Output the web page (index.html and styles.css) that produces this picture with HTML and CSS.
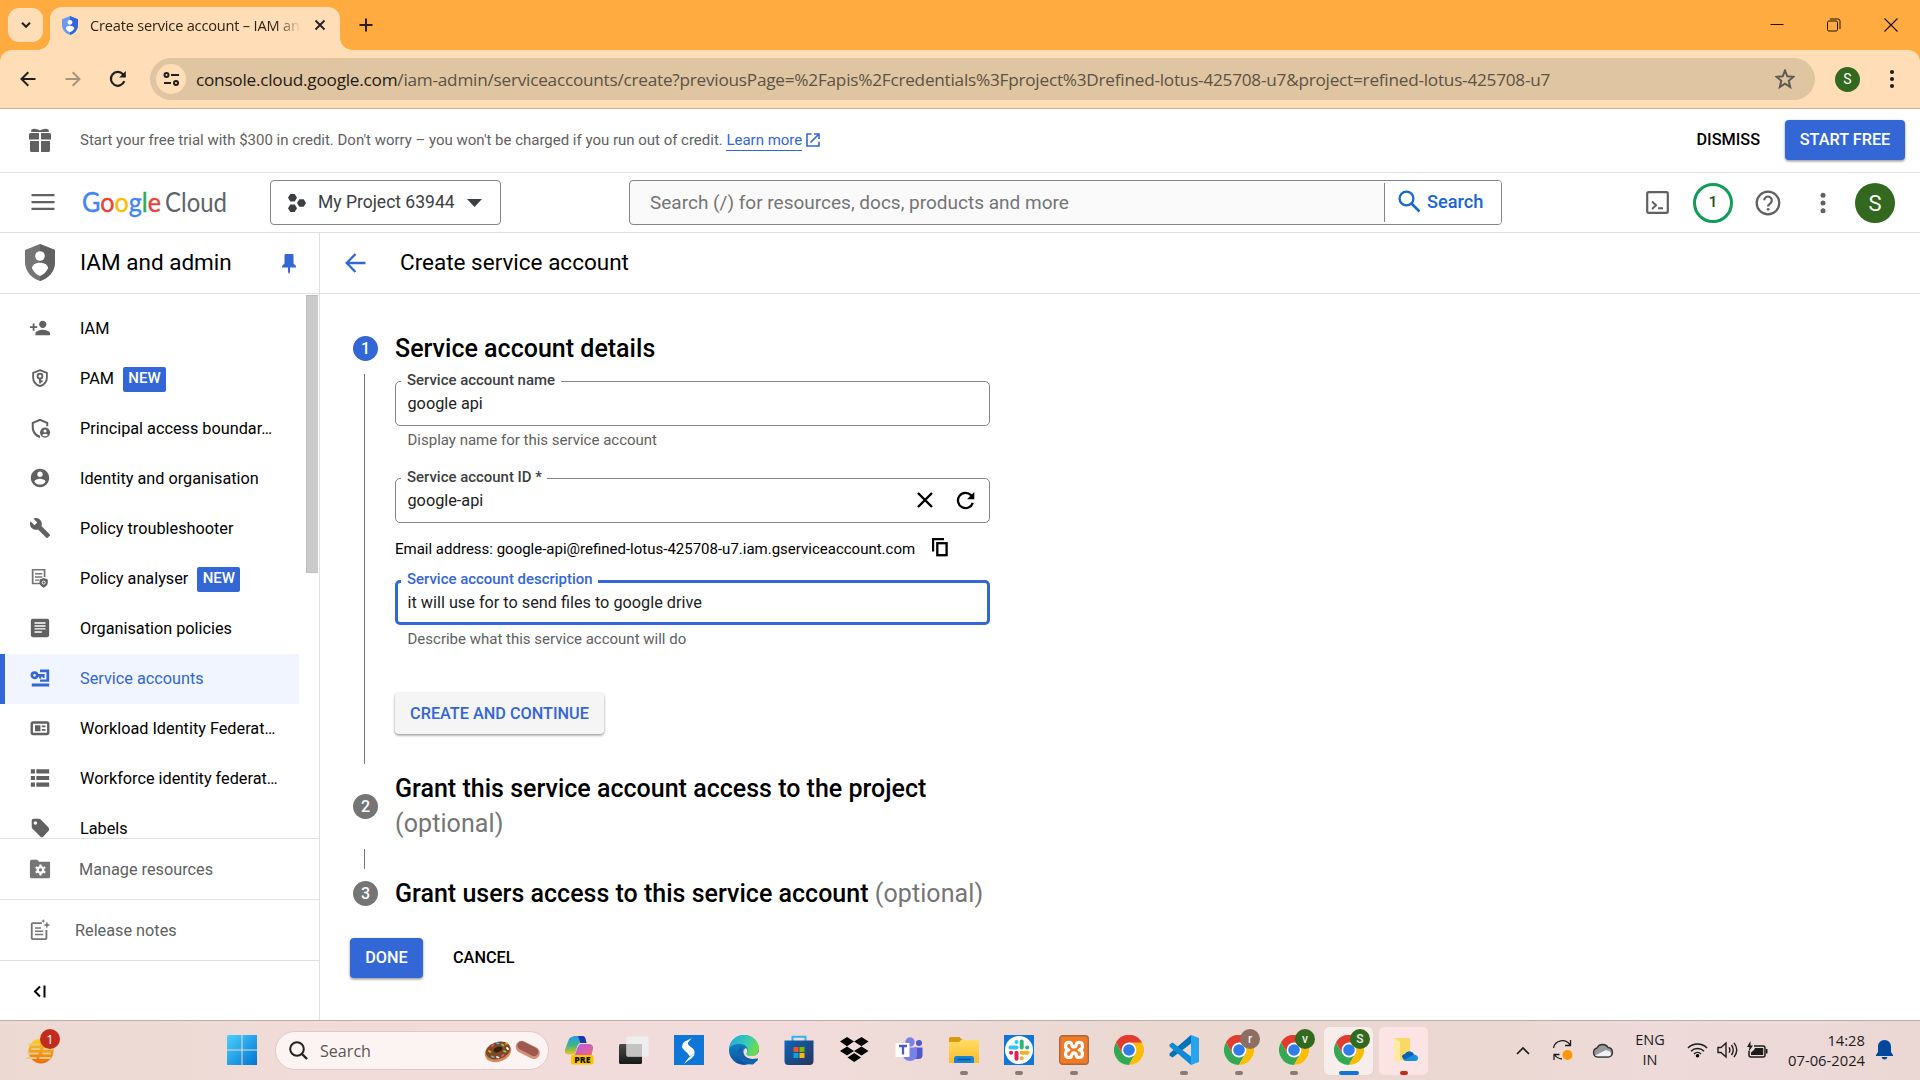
FILE: index.html
```html
<!DOCTYPE html>
<html lang="en-GB">
<head>
<meta charset="utf-8">
<title>Create service account – IAM and admin</title>
<link rel="stylesheet" href="styles.css">
</head>
<body>
<svg class="defs" aria-hidden="true">
  <defs>
    <linearGradient id="win" x1="0" y1="0" x2="1" y2="1"><stop offset="0" stop-color="#4ad1ff"/><stop offset="1" stop-color="#0074d4"/></linearGradient>
    <linearGradient id="edgeA" x1="0" y1="0" x2="1" y2="0.4"><stop offset="0" stop-color="#21a5e0"/><stop offset="0.6" stop-color="#35c9b7"/><stop offset="1" stop-color="#6bdc4c"/></linearGradient>
    <linearGradient id="edgeB" x1="0" y1="0" x2="0" y2="1"><stop offset="0" stop-color="#1793d9"/><stop offset="1" stop-color="#0c4f9c"/></linearGradient>
    <linearGradient id="store" x1="0" y1="0" x2="1" y2="1"><stop offset="0" stop-color="#0f62b8"/><stop offset="1" stop-color="#27365c"/></linearGradient>
    <linearGradient id="folder" x1="0" y1="0" x2="0" y2="1"><stop offset="0" stop-color="#ffdc63"/><stop offset="1" stop-color="#fcbc2a"/></linearGradient>
    <linearGradient id="copA" x1="0" y1="0" x2="0" y2="1"><stop offset="0" stop-color="#1f9ff0"/><stop offset="0.5" stop-color="#3fb57f"/><stop offset="1" stop-color="#f2c31c"/></linearGradient>
    <linearGradient id="copB" x1="0" y1="0" x2="1" y2="1"><stop offset="0" stop-color="#b25cf0"/><stop offset="1" stop-color="#f2667a"/></linearGradient>
    <linearGradient id="sun" x1="0" y1="0" x2="0" y2="1"><stop offset="0" stop-color="#ffd51c"/><stop offset="1" stop-color="#ec6a0c"/></linearGradient>
    <linearGradient id="tv" x1="0" y1="0" x2="0" y2="1"><stop offset="0" stop-color="#4a4a48"/><stop offset="1" stop-color="#191919"/></linearGradient>
    <g id="chrome">
      <circle cx="15" cy="15" r="15" fill="#fff"/>
      <path d="M15 15 2 7.5A15 15 0 0 1 28 7.5H15z" fill="#ea4335"/>
      <path d="M2 7.5A15 15 0 0 0 15 30L21.2 19 15 15 8.6 18.8z" fill="#34a853"/>
      <path d="M28 7.5A15 15 0 0 1 15 30L21.4 18.8 15 7.5z" fill="#fbbc04"/>
      <path d="M2 7.5 8.7 19 15 15V7.5H28A15 15 0 0 0 2 7.5z" fill="#e33b2e"/>
      <circle cx="15" cy="15" r="7.4" fill="#fff"/><circle cx="15" cy="15" r="5.8" fill="#2f7de9"/>
    </g>
  </defs>
</svg>

<header class="browser">
  <div class="tabstrip">
    <button class="tab-search"><svg width="12" height="12" viewBox="0 0 12 12"><path d="M2 3.800 6 7.800 10 3.800" fill="none" stroke="#1f1f1f" stroke-width="2"/></svg></button>
    <div class="tab">
      <svg width="16" height="19" viewBox="0 0 16 19"><path d="M8 0 16 3.200V9c0 4.600-3.400 8.600-8 10C3.400 17.600 0 13.600 0 9V3.200z" fill="#6a99ef"/><path d="M8 0 16 3.200V9c0 4.600-3.400 8.600-8 10z" fill="#3367d6"/><circle cx="8" cy="6.300" r="2.400" fill="#fff"/><path d="M8 9.800c2.500 0 4.200 1.200 4.200 2.700C11.400 14.300 9.900 15.500 8 16.200 6.100 15.500 4.600 14.300 3.800 12.500c0-1.500 1.700-2.700 4.200-2.700z" fill="#fff"/></svg>
      <span class="tab-title">Create service account – IAM an</span>
      <svg class="tab-x" width="12" height="12" viewBox="0 0 12 12"><path d="M1.500 1.500l9 9M10.500 1.500l-9 9" stroke="#1f1f1f" stroke-width="1.800"/></svg>
    </div>
    <svg class="new-tab" width="14" height="14" viewBox="0 0 14 14"><path d="M7 .5v13M.5 7h13" stroke="#2a2013" stroke-width="2"/></svg>
    <div class="window-buttons">
      <svg width="14" height="14" viewBox="0 0 14 14"><path d="M.5 6.500h13" stroke="#1a1408"/></svg>
      <svg width="14" height="14" viewBox="0 0 14 14"><g fill="none" stroke="#1a1408"><rect x=".5" y="3" width="10" height="10" rx="1.500"/><path d="M3 1h8a2 2 0 0 1 2 2v8"/></g></svg>
      <svg width="14" height="14" viewBox="0 0 14 14"><path d="M.5.5l13 13M13.500.5l-13 13" stroke="#1a1408" stroke-width="1.100"/></svg>
    </div>
  </div>
  <div class="toolbar">
    <div class="nav-buttons">
      <svg width="16" height="16" viewBox="0 0 16 16"><path d="M15.500 8H1.800M8.300 1.200 1.500 8l6.800 6.800" fill="none" stroke="#1f1f1f" stroke-width="2"/></svg>
      <svg width="16" height="16" viewBox="0 0 16 16"><path d="M.5 8h13.700M7.700 1.200 14.500 8l-6.800 6.800" fill="none" stroke="#a8927a" stroke-width="2"/></svg>
      <svg width="18" height="18" viewBox="0 0 18 18"><path d="M15.300 11.200A6.900 6.900 0 1 1 14 4.300l2 2.200" fill="none" stroke="#1f1f1f" stroke-width="2.200"/><path d="M16.800 1v6.600h-6.600z" fill="#1f1f1f"/></svg>
    </div>
    <div class="omnibox">
      <span class="site-info"><svg width="17" height="16" viewBox="0 0 17 16"><g fill="none" stroke="#1f1f1f" stroke-width="2"><circle cx="3.500" cy="4" r="2"/><path d="M8 4h8M1 12h7"/><circle cx="13" cy="12" r="2"/></g></svg></span>
      <span class="url"><b>console.cloud.google.com</b>/iam-admin/serviceaccounts/create?previousPage=%2Fapis%2Fcredentials%3Fproject%3Drefined-lotus-425708-u7&amp;project=refined-lotus-425708-u7</span>
      <svg width="20" height="20" viewBox="0 0 20 20"><path d="M10 1.500l2.300 5.800 6.200.5-4.800 4 1.500 6.200L10 14.600l-5.200 3.400 1.500-6.200-4.800-4 6.200-.5z" fill="none" stroke="#5f5a55" stroke-width="2"/></svg>
    </div>
    <span class="profile">S</span>
    <svg width="6" height="22" viewBox="0 0 6 22" fill="#1f1f1f"><circle cx="3" cy="4" r="2.100"/><circle cx="3" cy="11" r="2.100"/><circle cx="3" cy="18" r="2.100"/></svg>
  </div>
</header>

<section class="trial">
  <svg width="24" height="24" viewBox="0 0 24 24" fill="#616161"><path d="M3.500 1.500c2.500-1.500 5.500-.5 8.500 1 3-1.500 6-2.500 8.500-1L21 4H3z"/><path d="M1 6.500Q1 5 2.500 5H11v6.500H1zM13 5h8.500Q23 5 23 6.500v5H13zM2 13h9v11H3.500Q2 24 2 22.500zM13 13h9v9.500q0 1.500-1.500 1.500H13z"/></svg>
  <p>Start your free trial with $300 in credit. Don't worry – you won't be charged if you run out of credit. <a>Learn more</a></p>
  <svg class="ext" width="14" height="14" viewBox="0 0 14 14"><path d="M5.500 1H1v12h12V8.500M8 1h5v5M13 1 4.500 9.500" fill="none" stroke="#3367d6" stroke-width="1.600"/></svg>
  <button class="dismiss">DISMISS</button>
  <button class="btn primary">START FREE</button>
</section>

<nav class="topbar">
  <svg class="menu" width="24" height="18" viewBox="0 0 24 18" fill="#616161"><path d="M.5 1h23v2.300H.5zM.5 7.900h23v2.300H.5zM.5 14.700h23V17H.5z"/></svg>
  <svg class="logo" width="150" height="44" viewBox="0 0 150 44" font-family="Lato, sans-serif" font-size="27">
    <text x="1" y="31" textLength="79" lengthAdjust="spacingAndGlyphs" stroke-width=".4"><tspan fill="#4285f4" stroke="#4285f4">G</tspan><tspan fill="#ea4335" stroke="#ea4335">o</tspan><tspan fill="#fbbc04" stroke="#fbbc04">o</tspan><tspan fill="#4285f4" stroke="#4285f4">g</tspan><tspan fill="#34a853" stroke="#34a853">l</tspan><tspan fill="#ea4335" stroke="#ea4335">e</tspan></text>
    <text x="84" y="31" font-size="26" fill="#5f6368" textLength="62" lengthAdjust="spacingAndGlyphs">Cloud</text>
  </svg>
  <button class="project">
    <svg width="18" height="18" viewBox="0 0 18 18" fill="#3c4043"><path d="M2.300 0h4.400L9 3.800 6.700 7.600H2.300L0 3.800zM2.300 10.400h4.400L9 14.200 6.700 18H2.300L0 14.200zM11.300 5.200h4.400L18 9l-2.300 3.800h-4.400L9 9z"/></svg>
    <span>My Project 63944</span>
    <svg width="15" height="8" viewBox="0 0 15 8"><path d="M0 0h15L7.500 8z" fill="#3c4043"/></svg>
  </button>
  <div class="search">
    <span class="placeholder">Search (/) for resources, docs, products and more</span>
    <span class="go"><svg width="23" height="23" viewBox="0 0 23 23"><circle cx="8.500" cy="8.500" r="6.900" fill="none" stroke="#1967d2" stroke-width="2.300"/><path d="M13.500 13.500l8 8" stroke="#1967d2" stroke-width="2.700"/></svg>Search</span>
  </div>
  <div class="tools">
    <svg width="23" height="23" viewBox="0 0 23 23"><rect x="1.200" y="1.200" width="20.600" height="20.600" rx="1.500" fill="none" stroke="#616161" stroke-width="2.200"/><path d="M6 10.500l4 3.700-4 3.700M12 17.200h5" fill="none" stroke="#616161" stroke-width="2"/></svg>
    <span class="ring">1</span>
    <svg width="26" height="26" viewBox="0 0 26 26"><circle cx="13" cy="13" r="11.300" fill="none" stroke="#616161" stroke-width="2.300"/><path d="M9.200 10.200a3.800 3.800 0 1 1 6.300 3c-1.500 1.100-2.400 1.700-2.400 3.300" fill="none" stroke="#616161" stroke-width="2.200"/><circle cx="13.100" cy="19.300" r="1.400" fill="#616161"/></svg>
    <svg width="6" height="22" viewBox="0 0 6 22" fill="#616161"><circle cx="3" cy="3.200" r="2.500"/><circle cx="3" cy="11" r="2.500"/><circle cx="3" cy="18.800" r="2.500"/></svg>
    <span class="avatar">S</span>
  </div>
</nav>

<div class="page">
  <aside class="sidebar">
    <div class="side-title">
      <svg width="30" height="37" viewBox="0 0 30 37"><path d="M15 0 30 6v12c0 9-6.400 16.500-15 19C6.400 34.500 0 27 0 18V6z" fill="#757575"/><path d="M15 0 30 6v12c0 9-6.400 16.500-15 19z" fill="#616161"/><circle cx="15" cy="12" r="4.800" fill="#fff"/><path d="M15 18.700c5 0 8 2.400 8 5.500-1.500 3.700-4.500 6.300-8 7.800-3.500-1.500-6.500-4.100-8-7.800 0-3.100 3-5.500 8-5.500z" fill="#fff"/></svg>
      <h2>IAM and admin</h2>
      <svg class="pin" width="14" height="20" viewBox="0 0 14 20" fill="#3367d6"><path d="M2.500 1.200Q2.500 0 3.700 0h6.600q1.200 0 1.200 1.200V9.500L14 12v1.500H8V18l-1 2-1-2v-4.500H0V12l2.500-2.500z"/></svg>
    </div>
    <div class="side-scroll">
      <ul>
        <li><svg viewBox="0 0 24 24"><path d="M15 12c2.210 0 4-1.790 4-4s-1.790-4-4-4-4 1.790-4 4 1.790 4 4 4zm-9-2V7H4v3H1v2h3v3h2v-3h3v-2H6zm9 4c-2.670 0-8 1.340-8 4v2h16v-2c0-2.660-5.330-4-8-4z"/></svg>IAM</li>
        <li><svg viewBox="0 0 24 24"><path d="M12 3.500l7.500 2.800v5.200c0 4.300-3 8-7.500 9.400-4.500-1.400-7.500-5.100-7.500-9.400V6.300z" fill="none" stroke="#616161" stroke-width="2"/><circle cx="12" cy="10" r="2.600" fill="none" stroke="#616161" stroke-width="2"/><path d="M11 12h2v6h-2zM13 14.500h1.800v2H13z"/></svg>PAM<em>NEW</em></li>
        <li><svg viewBox="0 0 24 24"><path d="M21 10V5.700L12 2 3 5.700v5.800c0 5.200 3.600 10 8.500 11.400l.5-.2V20.500c-4-1.500-6.800-5.200-6.800-9.200V7.100L12 4.300l6.800 2.800V10z"/><circle cx="17.500" cy="17" r="5.500"/><circle cx="17.500" cy="15.300" r="1.700" fill="#fff"/><path d="M14.300 19.500c.8-1.300 5.600-1.300 6.400 0-1.500 2-4.900 2-6.400 0z" fill="#fff"/></svg>Principal access boundar…</li>
        <li><svg viewBox="0 0 24 24"><path d="M12 2C6.480 2 2 6.480 2 12s4.480 10 10 10 10-4.480 10-10S17.520 2 12 2zm0 3c1.660 0 3 1.340 3 3s-1.340 3-3 3-3-1.340-3-3 1.340-3 3-3zm0 14.200c-2.500 0-4.710-1.280-6-3.220.030-1.990 4-3.080 6-3.080 1.990 0 5.970 1.090 6 3.080-1.290 1.940-3.500 3.220-6 3.220z"/></svg>Identity and organisation</li>
        <li><svg viewBox="0 0 24 24"><path d="M22.700 19l-9.100-9.100c.9-2.300.4-5-1.500-6.900-2-2-5-2.400-7.400-1.300L9 6 6 9 1.600 4.700C.4 7.100.9 10.100 2.900 12.100c1.900 1.900 4.600 2.400 6.900 1.500l9.100 9.100c.4.4 1 .4 1.400 0l2.300-2.300c.5-.4.5-1.100.1-1.400z"/></svg>Policy troubleshooter</li>
        <li><svg viewBox="0 0 24 24"><path d="M12 18H4V3h13v8" fill="none" stroke="#757575" stroke-width="1.900"/><path d="M6.500 6.500h8v1.600h-8zM6.500 10h8v1.600h-8zM6.500 13.500H11v1.600H6.500z" fill="#757575"/><path d="M16 12l4.500 1.700v3.300c0 2.500-1.900 4.500-4.500 5.500-2.600-1-4.500-3-4.500-5.500v-3.300z"/><circle cx="16" cy="17" r="1.700" fill="none" stroke="#fff"/></svg>Policy analyser<em>NEW</em></li>
        <li><svg viewBox="0 0 24 24"><rect x="2" y="2" width="20" height="20" rx="2"/><path d="M6 6.500h12M6 9.800h12M6 13h12M6 16.300h8" stroke="#fff" stroke-width="1.500"/></svg>Organisation policies</li>
        <li class="active"><svg viewBox="0 0 24 24"><circle cx="6" cy="9" r="2.900" fill="none" stroke="#3367d6" stroke-width="2.800"/><path d="M8.500 7.500h8.500v4.500h-2v-1.300h-1.500V12.500h-2.500v-1.800H8.500zM12 2.800h10V16H12v-2.500h7V5.800H12zM3 18h19v3.200H3z"/></svg>Service accounts</li>
        <li><svg viewBox="0 0 24 24"><rect x="3" y="6" width="18" height="12.500" rx="1.500" fill="none" stroke="#616161" stroke-width="2.600"/><path d="M6.500 9h6v6.500h-6zM14 9.300h4v2h-4zM14 13h4v2h-4z"/></svg>Workload Identity Federat…</li>
        <li><svg viewBox="0 0 24 24"><path d="M2 2.500h4.500v4.500H2zM8 2.500h14v4.500H8zM2 9.700h4.500v4.500H2zM8 9.700h14v4.500H8zM2 17h4.500v4.500H2zM8 17h14v4.500H8z"/></svg>Workforce identity federat…</li>
        <li><svg viewBox="0 0 24 24"><path d="M21.410 11.580l-9-9C12.050 2.220 11.550 2 11 2H5C3.900 2 3 2.900 3 4v7c0 .55.220 1.050.590 1.420l9 9c.36.360.860.580 1.410.580.550 0 1.050-.220 1.410-.590l6-6.500c.370-.360.590-.860.590-1.410 0-.550-.230-1.060-.590-1.420zM7 8.500a2 2 0 1 1 0-4 2 2 0 0 1 0 4z"/></svg>Labels</li>
      </ul>
      <div class="thumb"></div>
    </div>
    <div class="side-link"><svg viewBox="0 0 24 24" fill="#757575"><path d="M3 2h6l2 2h11q1 0 1 1v15.500q0 1.500-1.500 1.500h-19Q1 22 1 20.500V4q0-2 2-2z"/><circle cx="12.500" cy="13" r="3" fill="none" stroke="#fff" stroke-width="2.600"/><path d="M12.500 7v3M12.500 16v3M7.300 10l2.600 1.500M15.100 14.500l2.600 1.500M7.300 16l2.600-1.500M15.100 11.500l2.600-1.500" stroke="#fff" stroke-width="2.400"/></svg>Manage resources</div>
    <div class="side-link notes"><svg viewBox="0 0 24 24" fill="#757575"><path d="M14 4.500H4q-1 0-1 1V21q0 1 1 1h14q1 0 1-1V12" fill="none" stroke="#757575" stroke-width="2"/><path d="M6.500 9h6.500v1.700H6.500zM6.500 12.500h9v1.700h-9zM6.500 16h9v1.700h-9zM19.500 2.500l1 3 3 1-3 1-1 3-1-3-3-1 3-1zM15.500 0l.6 1.700 1.700.6-1.700.6-.6 1.700-.6-1.700-1.700-.6 1.700-.6z"/></svg>Release notes</div>
    <div class="collapse"><svg width="13" height="13" viewBox="0 0 13 13"><path d="M7 1.500 2 6.500l5 5M11.500.5v12" fill="none" stroke="#000" stroke-width="2"/></svg></div>
  </aside>

  <main>
    <div class="page-title">
      <svg width="21" height="20" viewBox="0 0 21 20"><path d="M20.500 10H2M10.500 1 1.700 10l8.800 9" fill="none" stroke="#3367d6" stroke-width="2.300"/></svg>
      <h1>Create service account</h1>
    </div>
    <div class="stepper">
      <section class="step first">
        <span class="num on">1</span><h3>Service account details</h3>
        <i class="line"></i>
        <div class="form">
          <div class="field"><label>Service account name</label><span>google api</span></div>
          <p class="hint">Display name for this service account</p>
          <div class="field id"><label>Service account ID *</label><span>google-api</span>
            <svg width="16" height="16" viewBox="0 0 16 16"><path d="M1 1l14 14M15 1 1 15" stroke="#000" stroke-width="2.400"/></svg>
            <svg width="19" height="19" viewBox="0 0 19 19"><path d="M16.800 11.800A7.600 7.600 0 1 1 15 4.100l2 2" fill="none" stroke="#000" stroke-width="2.300"/><path d="M18.300 1v7.200h-7.200z"/></svg>
          </div>
          <p class="email">Email address: google-api@refined-lotus-425708-u7.iam.gserviceaccount.com <svg width="16" height="19" viewBox="0 0 16 19"><path d="M1.100 13.500V1.200H12" fill="none" stroke="#000" stroke-width="2.200"/><rect x="5.300" y="5.200" width="9.300" height="12" fill="none" stroke="#000" stroke-width="2.300"/></svg></p>
          <div class="field focus"><label>Service account description</label><span>it will use for to send files to google drive</span></div>
          <p class="hint">Describe what this service account will do</p>
          <button class="btn flat">CREATE AND CONTINUE</button>
        </div>
      </section>
      <section class="step second">
        <span class="num">2</span><h3>Grant this service account access to the project <small>(optional)</small></h3>
        <i class="line"></i>
      </section>
      <section class="step">
        <span class="num">3</span><h3>Grant users access to this service account <small>(optional)</small></h3>
      </section>
    </div>
    <div class="actions"><button class="btn primary">DONE</button><button class="cancel">CANCEL</button></div>
  </main>
</div>

<footer class="taskbar">
  <div class="weather">
    <svg width="28" height="28" viewBox="0 0 28 28"><circle cx="15" cy="14" r="12.500" fill="url(#sun)"/><path d="M3 7.500h10M6 12h7M18 12h8M2 16.500h10M17 16.500h7M1 21h9M14 21h10" stroke="#e8c98f" stroke-width="2" stroke-linecap="round"/></svg>
    <b>1</b>
  </div>
  <div class="app start"><svg width="30" height="30" viewBox="0 0 30 30" fill="url(#win)"><path d="M0 1.500Q0 0 1.500 0H29.500V0H30V30H0zM14.500 0v14.500H0v1h14.500V30h1V15.500H30v-1H15.500V0z" fill-rule="evenodd"/></svg></div>
  <div class="tb-search">
    <svg width="19" height="19" viewBox="0 0 19 19"><circle cx="8" cy="8" r="6.800" fill="none" stroke="#222" stroke-width="2"/><path d="M13 13l5 5" stroke="#222" stroke-width="2.400"/></svg>
    <span>Search</span>
    <svg width="57" height="26" viewBox="0 0 57 26"><ellipse cx="14" cy="14" rx="13.500" ry="9.800" transform="rotate(-18 14 14)" fill="#d98a5c"/><ellipse cx="14" cy="12.500" rx="12.500" ry="8.500" transform="rotate(-18 14 12.500)" fill="#7a4b26"/><ellipse cx="14" cy="11.500" rx="4.500" ry="2.500" transform="rotate(-18 14 11.500)" fill="#3a1e0e"/><g stroke-width="1.800" stroke-linecap="round"><path d="M5 13l1.500 1M22 6l1.500-.5" stroke="#f2a02c"/><path d="M8 8l1.500-1M18 18l1.500-1" stroke="#ef4f8b"/><path d="M13 5l1.500 .5M8 18.500l1.500 .5" stroke="#58b8e8"/><path d="M20 13l1.500 .8M18 6.500l1.500 1" stroke="#7fcb55"/><path d="M13 19l1.500 .5M23 10l1 1" stroke="#fff"/></g><rect x="31" y="6" width="25.500" height="12" rx="6" transform="rotate(27 44 12)" fill="#d98c78"/><rect x="32.500" y="6.500" width="22.500" height="8.500" rx="4.250" transform="rotate(27 44 11)" fill="#9c5a4e"/></svg>
  </div>
  <div class="app"><svg width="30" height="30" viewBox="0 0 30 30"><path d="M8 2Q9 1 11 1h7q3 0 3.500 3l1 4H17q-3 0-4 4l-2 7.500H5Q0 19.500 1 14.500L5 4Q6 2 8 2z" fill="url(#copA)"/><path d="M14 1h4q3 0 3.500 3l1 4h-6z" fill="#1b35b0"/><path d="M17 9h7.500q5 0 4.500 4.500L27.500 20H11l2-6q1.500-5 4-5z" fill="url(#copB)"/><rect x="7" y="20" width="22.500" height="9.500" rx="2" fill="#ffc400"/><text x="18.300" y="28" font-family="Open Sans, sans-serif" font-size="8.800" font-weight="800" text-anchor="middle" fill="#111">PRE</text></svg></div>
  <div class="app"><svg width="30" height="30" viewBox="0 0 30 30"><rect x="0" y="9" width="23" height="20" rx="1.500" fill="url(#tv)"/><rect x="7.500" y="1.500" width="22" height="20" rx="1.500" fill="#eee"/><path d="M7.500 9H23v12.500H9Q7.500 21.500 7.500 20z" fill="#c4c3c2"/></svg></div>
  <div class="app"><svg width="30" height="30" viewBox="0 0 30 30"><path d="M0 0h30v30H0z" fill="#0d76d6"/><path d="M19.500 1C17 6 8.500 4 8 12c1.500 4 6.500 5.500 7.500 9.500L20.500 18C21.500 12 13 12 14 7.500z" fill="#fff"/><path d="M10 29.500C12 25 15.500 22 20.500 18 21 22.500 14.500 24 10 29.500z" fill="#fff"/></svg></div>
  <div class="app"><svg width="30" height="30" viewBox="0 0 30 30"><circle cx="15" cy="15" r="15" fill="url(#edgeB)"/><path d="M0 14C1 5 8 0 15 0c9 0 15 6.500 15 13.500 0 5-4 7.500-8 7.500-3 0-5-1-4.500-2.500 2.500-3 1-8-3.500-9C8 8 2 10 0 14z" fill="url(#edgeA)"/><path d="M12.500 15.500c0 6 5 9.500 9.500 9.500 2.500 0 4.500-.8 6.500-2l.5 2-5 4.500C15 30 8 25 8.500 17c.3-3 3-5.500 6-5-1.200.8-2 2-2 3.500z" fill="#1262ad"/><path d="M17.500 18.500c-.5 1.500 1.500 2.500 4.500 2.500 3.500 0 6.500-1.500 8-4.500V22l-1.500 1c-7 2.500-14.500-.5-14-7 .2-1.500 1.200-2.500 2.500-3 1.500 1.500 1.800 3.700.5 5.500z" fill="#f1dcdb"/></svg></div>
  <div class="app"><svg width="30" height="30" viewBox="0 0 30 30"><path d="M8.500 6V1.800H21.500V6" fill="none" stroke="#2fb5ef" stroke-width="2"/><path d="M.5 5.500h29V26q0 4-4 4h-21q-4 0-4-4z" fill="url(#store)"/><path d="M9.500 12h5v5h-5z" fill="#f25022"/><path d="M15.500 12h5v5h-5z" fill="#7fba00"/><path d="M9.500 18h5v5h-5z" fill="#00a4ef"/><path d="M15.500 18h5v5h-5z" fill="#ffb900"/></svg></div>
  <div class="app"><svg width="30" height="30" viewBox="0 0 30 30"><path d="M8 2l7 4.600-7 4.600L1 6.600zM22.500 2l7 4.600-7 4.600-7.500-4.600zM8 11.500l7 4.600-7 4.500-7-4.500zM22.500 11.500l7 4.600-7 4.500L15 16.100zM15.200 18l6.800 4.400-6.800 4.600-6.700-4.600z"/></svg></div>
  <div class="app"><svg width="30" height="30" viewBox="0 0 30 30"><circle cx="16" cy="7" r="4.700" fill="#7b83eb"/><circle cx="25" cy="8" r="3" fill="#5059c9"/><path d="M20 12.500h8.500V20q0 4-4 4H20z" fill="#5059c9"/><path d="M9 12.500h14V19q0 7-7 7t-7-7z" fill="#7b83eb"/><path d="M1.500 8h14v14h-14z" fill="#fff"/><path d="M5 11h8M9 11v8.500" stroke="#5059c9" stroke-width="2.300"/></svg></div>
  <div class="app run"><svg width="30" height="30" viewBox="0 0 30 30"><path d="M0 3.500Q0 2 1.500 2h9l3 3H12l-2 3H0z" fill="#d99a0b"/><path d="M0 7h10l3-2h15.500Q30 5 30 6.500V28H0z" fill="url(#folder)"/><path d="M5 28v-4.500Q5 21 7.500 21h15q2.500 0 2.500 2.500V28z" fill="#1483d8"/><path d="M8.500 24.500h13" stroke="#0b5494" stroke-width="1.600"/></svg></div>
  <div class="app run"><svg width="30" height="30" viewBox="0 0 30 30"><path d="M0 0h30v30H0z" fill="#0d76d6"/><circle cx="15" cy="15" r="14" fill="#fff"/><g stroke-width="4" stroke-linecap="round"><path d="M6.500 12.500h6" stroke="#36c5f0"/><path d="M12.500 7v.1" stroke="#36c5f0"/><path d="M17.700 6.500v6" stroke="#2eb67d"/><path d="M23.200 12.500h.1" stroke="#2eb67d"/><path d="M17.700 17.700h6" stroke="#ecb22e"/><path d="M17.700 23.200v.1" stroke="#ecb22e"/><path d="M12.500 17.700v6" stroke="#e01e5a"/><path d="M7 17.700h.1" stroke="#e01e5a"/></g></svg></div>
  <div class="app run"><svg width="30" height="30" viewBox="0 0 30 30"><rect x=".7" y=".7" width="28.600" height="28.600" rx="3" fill="#f37a24" stroke="#a9683d" stroke-width="1.400"/><path d="M9.800 7.300q2.700 0 3 2.500.3 2.200 2.200 2.200t2.200-2.200q.3-2.500 3-2.500 3.300 0 3.300 3.600T20.200 15q3.300.5 3.300 4t-3.300 3.500q-2.700 0-3-2.500-.3-2.200-2.200-2.200T12.800 20q-.3 2.500-3 2.500-3.300 0-3.300-3.500T9.800 15Q6.500 14.500 6.500 10.900t3.300-3.600z" fill="none" stroke="#fff" stroke-width="3.200" stroke-linejoin="round"/></svg></div>
  <div class="app"><svg width="30" height="30" viewBox="0 0 30 30"><use href="#chrome"/></svg></div>
  <div class="app run"><svg width="30" height="30" viewBox="0 0 30 30"><path d="M22 0l8 3v24l-8 3z" fill="#26a4f2"/><path d="M22 0v8.500L3.500 22.500.5 20.500v-2z" fill="#0072b8"/><path d="M22 30v-8.500L3.500 7.500.5 9.500v2z" fill="#1089d6"/></svg></div>
  <div class="app run"><svg width="30" height="30" viewBox="0 0 30 30"><use href="#chrome"/></svg><b class="who brown">r</b></div>
  <div class="app run"><svg width="30" height="30" viewBox="0 0 30 30"><use href="#chrome"/></svg><b class="who">v</b></div>
  <div class="app run current"><svg width="30" height="30" viewBox="0 0 30 30"><use href="#chrome"/></svg><b class="who">S</b></div>
  <div class="app run alert"><svg width="30" height="30" viewBox="0 0 30 30"><path d="M5 3h16v22H5z" fill="#fbd765"/><path d="M5 3l6 3.500V26l-1 3-5-4.500z" fill="#ffe9a3"/><path d="M16 26a4 4 0 0 1 0-7q1.500-3 5-2.500 3 .5 4 3 4 .5 4 3.500 0 3-3 3z" fill="#1490df"/><path d="M16 19q1.500-3 5-2.500 3 .5 4 3l-9 5q-3-1-3-3t3-2.500z" fill="#0a64b4"/></svg></div>
  <div class="tray">
    <svg class="chev" width="14" height="9" viewBox="0 0 14 9"><path d="M1 8l6-6 6 6" fill="none" stroke="#1c1c1c" stroke-width="1.700"/></svg>
    <svg class="sync" width="22" height="22" viewBox="0 0 22 22"><path d="M1.500 9A9 9 0 0 1 18 6M18.500 1v5.500H13M2 21v-5.500h5.500M2.500 15.500q2.500 4 7.500 4.500" fill="none" stroke="#1c1c1c" stroke-width="1.300"/><circle cx="15.500" cy="16" r="5" fill="#ff9800"/></svg>
    <svg class="cloud" width="22" height="16" viewBox="0 0 22 16"><path d="M5.500 15a4.600 4.600 0 0 1-.5-9A6.300 6.300 0 0 1 16 5.500a4.800 4.800 0 0 1 .5 9.500z" fill="#999" stroke="#333" stroke-width="1.400"/><path d="M3 13.500 14 8q5 1 5 4 0 2.300-3 2.300H5z" fill="#eef1f7"/></svg>
    <span class="lang">ENG<br>IN</span>
    <svg class="wifi" width="21" height="16" viewBox="0 0 21 16"><g fill="none" stroke="#1c1c1c" stroke-width="1.500"><path d="M1 6a13.400 13.400 0 0 1 19 0M4 9.200a9.200 9.200 0 0 1 13 0M7 12a5 5 0 0 1 7 0"/></g><circle cx="10.500" cy="13.800" r="1.800"/></svg>
    <svg class="vol" width="21" height="18" viewBox="0 0 21 18"><g fill="none" stroke="#1c1c1c" stroke-width="1.400"><path d="M1 6.500h3L9 2v14l-5-4.500H1z"/><path d="M12 6.300q1.800 2.700 0 5.400M14.500 4q3.500 5 0 10M17 1.800q5.500 7.200 0 14.400"/></g></svg>
    <svg class="batt" width="21" height="18" viewBox="0 0 21 18"><path d="M7 5h9q2 0 2 2v7q0 2-2 2H4q-2 0-2-2v-4" fill="none" stroke="#1c1c1c" stroke-width="1.500"/><path d="M8 7h8.200v7H4v-2.500L7 9zM19 8h1.500v4.500H19zM3.500 0 0 6h2.500L1.500 11 6 4.500H3.500z" fill="#1c1c1c"/></svg>
    <span class="clock">14:28<br>07-06-2024</span>
    <svg class="bell" width="17" height="20" viewBox="0 0 17 20" fill="#00489b"><path d="M8.500 0C4.500 0 2 3 2 6.500V12L0 15v1h17v-1l-2-3V6.500C15 3 12.500 0 8.500 0zM5.500 17h6q-.8 2.500-3 2.500t-3-2.500z"/></svg>
  </div>
</footer>
</body>
</html>
```
FILE: styles.css
```css
* { box-sizing: border-box; }
body, h1, h2, h3, p, ul { margin: 0; padding: 0; }
body {
  width: 1920px; height: 1080px; overflow: hidden;
  display: flex; flex-direction: column;
  background: #fff; color: #000;
  font-family: Roboto, sans-serif; font-size: 16.25px;
}
button { font: inherit; border: 0; background: none; padding: 0; }
svg { flex: none; display: block; }
.defs { position: absolute; width: 0; height: 0; }
h1, h2 { font-size: 22.5px; font-weight: 400; white-space: nowrap; }

/* Browser window */
.browser { height: 109px; flex: none; background: #ffab40; font-family: "Open Sans", sans-serif; }
.tabstrip { height: 50px; display: flex; align-items: flex-start; padding-left: 8px; }
.tab-search {
  width: 35px; height: 34px; margin-top: 8px; border-radius: 11px;
  background: #ffdeb7; display: grid; place-items: center;
}
.tab {
  position: relative; width: 290px; height: 43px; margin: 7px 0 0 7px; padding: 0 14px 7px 12px;
  display: flex; align-items: center; border-radius: 12px 12px 0 0; background: #ffdeb7;
}
.tab::before, .tab::after {
  content: ""; position: absolute; bottom: 0; width: 12px; height: 12px;
}
.tab::before { left: -12px; background: radial-gradient(circle at 0 0, transparent 11.5px, #ffdeb7 12px); }
.tab::after { right: -12px; background: radial-gradient(circle at 100% 0, transparent 11.5px, #ffdeb7 12px); }
.tab-title {
  flex: 1; margin-left: 12px; margin-right: 13px; white-space: nowrap;
  font-size: 14.6px; letter-spacing: -.2px; color: #2c2419;
  -webkit-mask-image: linear-gradient(90deg, #000 88%, transparent);
  mask-image: linear-gradient(90deg, #000 88%, transparent);
}
.new-tab { margin: 18px 0 0 19px; }
.window-buttons { margin: 18px 22px 0 auto; display: flex; gap: 43px; }
.toolbar {
  height: 59px; display: flex; align-items: center; padding: 0 25px 0 20px;
  background: #ffdeb7; border-bottom: 1px solid #cbb091; border-radius: 12px 12px 0 0;
}
.nav-buttons { width: 130px; display: flex; align-items: center; gap: 28.5px; }
.omnibox {
  width: 1665px; height: 42px; border-radius: 21px; background: #dfc5a2;
  display: flex; align-items: center; padding: 0 20px 0 6px;
}
.site-info { width: 30px; height: 30px; border-radius: 50%; background: #ffdeb7; display: grid; place-items: center; }
.url { flex: 1; margin-left: 10px; font-size: 17.2px; letter-spacing: -.235px; color: #5c5245; white-space: nowrap; }
.url b { font-weight: 400; color: #1f1a13; }
.profile {
  width: 25px; height: 25px; margin: 0 29px 0 20px; border-radius: 50%; background: #33691e; color: #fff;
  font: 14px/25px Roboto, sans-serif; text-align: center;
}

/* Trial banner */
.btn {
  height: 40px; border-radius: 4px; font-weight: 500;
  box-shadow: 0 1px 3px rgba(0, 0, 0, .35), 0 2px 2px rgba(0, 0, 0, .12);
}
.primary { background: #3367d6; color: #fff; }
.trial {
  height: 64px; flex: none; padding: 0 15px 2px 28px; border-bottom: 1px solid #e0e0e0;
  display: flex; align-items: center;
}
.trial p { margin-left: 28px; font-size: 15px; letter-spacing: -.01px; color: #616161; white-space: nowrap; }
.trial a { color: #3367d6; border-bottom: 1px solid #3367d6; padding-bottom: 1px; }
.ext { margin: 1px 0 0 4px; }
.dismiss { margin-left: auto; margin-right: 25px; font-weight: 500; }
.trial .btn { width: 120px; }

/* Product header */
.topbar { height: 60px; flex: none; border-bottom: 1px solid #e0e0e0; display: flex; align-items: center; padding: 0 25px 0 31px; }
.menu { margin-top: -1px; }
.logo { margin-left: 26px; }
.project {
  width: 231px; height: 45px; margin-left: 39px; padding: 0 18px 0 17px; border: 1px solid #80868b; border-radius: 4px;
  display: flex; align-items: center; font-size: 17.5px; color: #3c4043;
}
.project span { flex: 1; text-align: left; margin: -2px 0 0 12px; }
.search {
  width: 873px; height: 45px; margin-left: 128px; border: 1px solid #80868b; border-radius: 4px; background: #fafafa;
  display: flex; align-items: center; overflow: hidden;
}
.placeholder { flex: 1; padding-left: 20px; font-size: 19px; color: #757575; }
.go {
  width: 117px; height: 39px; padding: 0 0 2px 13px; border-left: 1px solid #80868b; background: #fff;
  display: flex; align-items: center; gap: 6px; font-size: 18.2px; font-weight: 500; color: #1967d2;
  box-shadow: 0 3px 0 #fff, 0 -3px 0 #fff;
}
.tools { margin-left: auto; display: flex; align-items: center; }
.ring {
  width: 40px; height: 40px; margin: 0 22px 0 24px; border-radius: 50%; border: 3px solid #0f9d58;
  font-size: 15px; font-weight: 500; line-height: 33px; text-align: center; color: #174d20;
}
.tools svg:nth-of-type(3) { margin: 0 29px 0 39px; }
.avatar { width: 40px; height: 40px; border-radius: 50%; background: #33691e; color: #fff; font-size: 22px; line-height: 41px; text-align: center; }

/* Sidebar */
.page { flex: 1; min-height: 0; display: flex; }
.sidebar { width: 320px; flex: none; border-right: 1px solid #e0e0e0; display: flex; flex-direction: column; }
.side-title { height: 61px; flex: none; display: flex; align-items: center; padding: 0 23px 0 25px; border-bottom: 1px solid #e0e0e0; }
.side-title > svg:first-child { margin-top: -2px; }
.side-title h2 { flex: 1; margin-left: 25px; margin-top: -3px; }
.pin { margin-top: 2px; }
.side-scroll { height: 545px; flex: none; display: flex; overflow: hidden; border-bottom: 1px solid #e0e0e0; }
.side-scroll ul { list-style: none; width: 299px; padding-top: 10px; }
.side-scroll li { height: 50px; display: flex; align-items: center; padding: 0 0 2px 29px; white-space: nowrap; }
.side-scroll li svg { width: 22px; height: 22px; margin-right: 29px; fill: #616161; }
.side-scroll li.active { background: #f0f5ff; color: #3367d6; border-left: 5px solid #3367d6; padding-left: 24px; }
.side-scroll li.active svg { fill: #3367d6; }
.side-scroll em {
  width: 43px; height: 25px; margin: 3px 0 0 9px; border-radius: 2px; background: #3367d6; color: #fff;
  font: 500 15px/23px Roboto, sans-serif; text-align: center;
}
.thumb { width: 12px; height: 278px; margin: 1px 0 0 7px; background: #cbcbcb; border: 1px solid #bdbdbd; border-width: 1px 0 1px 1px; }
.side-link { height: 61px; flex: none; display: flex; align-items: center; padding-left: 29px; color: #616161; border-bottom: 1px solid #e0e0e0; }
.side-link svg { width: 22px; height: 22px; margin-right: 28px; }
.side-link.notes svg { margin-right: 24px; }
.collapse { flex: 1; display: flex; align-items: center; padding: 1px 0 0 33px; }

/* Main content */
main { flex: 1; }
.page-title { height: 61px; display: flex; align-items: center; padding-left: 24.5px; border-bottom: 1px solid #e0e0e0; }
.page-title h1 { margin: -3px 0 0 34.5px; }
.stepper { width: 690px; padding: 37px 0 0 33px; }
.step { display: grid; grid-template-columns: 25px 600px; column-gap: 17px; align-items: center; }
.step h3 { font-size: 25px; line-height: 35px; font-weight: 500; letter-spacing: .01px; }
.step small { font-size: 25px; font-weight: 400; letter-spacing: .1px; color: #757575; }
.num { width: 25px; height: 25px; border-radius: 50%; background: #757575; color: #fff; font-size: 16px; font-weight: 500; line-height: 25px; text-align: center; }
.num.on { background: #3367d6; }
.line { justify-self: center; width: 1px; background: #757575; margin-left: -2px; }
.first .line { align-self: start; height: 390px; margin-top: 8px; }
.form { width: 595px; height: 405px; padding-top: 15px; }
.field { height: 45px; border: 1px solid #80868b; border-radius: 5px; position: relative; display: flex; align-items: center; padding: 0 14px 1px 11.5px; color: #212121; }
.field label { position: absolute; left: 5px; top: -11px; padding: 0 5.5px 0 6px; background: #fff; font-size: 14.95px; font-weight: 500; line-height: 19px; color: #3c4043; white-space: nowrap; }
.field span { flex: 1; }
.field.id svg:last-child { margin-left: 23px; }
.focus { border: 3px solid #3367d6; padding: 0 9.5px; }
.focus label { left: 3px; top: -13px; color: #3367d6; }
.hint { margin-left: 12.5px; font-size: 15px; line-height: 18px; padding-top: 5px; color: #616161; }
.field.id { margin-top: 29px; }
.email { height: 57px; display: flex; align-items: center; gap: 17px; font-size: 15px; white-space: nowrap; padding-bottom: 5px; }
.email svg { margin-top: -3px; }
.flat { width: 209px; height: 41px; margin-top: 45px; background: #f5f5f5; color: #3367d6; }
.second .line { height: 20px; margin-top: 8px; margin-bottom: 7px; }
.actions { display: flex; align-items: center; gap: 30px; padding: 27px 0 0 30px; }
.actions .btn { width: 73px; }
.cancel { font-weight: 500; }
.actions button { padding-bottom: 2px; }

/* Taskbar */
.taskbar {
  height: 60px; flex: none; display: flex; align-items: center; border-top: 1px solid #bcaeab;
  background: linear-gradient(90deg, #ebd9d2 0, #f2dcda 22%, #f1dcdb 40%, #ead8d1 60%, #ebd8d2 78%, #eedad9 86%, #ebd8d5 100%);
  font-family: "Open Sans", sans-serif; color: #1c1c1c;
}
.weather { position: relative; width: 188px; padding-left: 26px; }
.weather b { position: absolute; left: 40px; top: -8px; width: 20px; height: 20px; border-radius: 50%; background: #c42b1c; color: #fff; font-size: 13px; font-weight: 400; line-height: 20px; text-align: center; }
.app { position: relative; flex: none; width: 55px; height: 50px; display: grid; place-items: center; padding-bottom: 1px; }
.start { margin-left: 27px; width: 54px; }
.tb-search { width: 274px; height: 39px; margin: 0 3px 0 6px; border-radius: 20px; background: #fbf4f2; border: 1px solid #dfc9c6; display: flex; align-items: center; padding: 0 7px 0 13px; }
.tb-search + .app { margin-left: -1px; }
.tb-search span { flex: 1; margin-left: 12px; font-size: 16.1px; color: #5b5554; }
.run::after { content: ""; position: absolute; left: 50%; bottom: 1px; width: 8px; height: 4px; margin-left: -4px; border-radius: 2px; background: #867b78; }
.current::after { width: 20px; margin-left: -10px; background: #0d76d6; }
.alert::after { background: #c42b1c; }
.current::before, .alert::before { content: ""; position: absolute; z-index: -1; left: 3px; top: 1px; width: 49px; height: 48px; border-radius: 5px; background: #f7edea; box-shadow: 0 0 1px #cdbcb8; }
.alert::before { background: #fce4e4; box-shadow: none; }
.app, .taskbar { isolation: isolate; }
.who { position: absolute; right: 6px; top: 3px; width: 20px; height: 20px; border-radius: 50%; background: #33691e; color: #e8f0e4; font: 500 12px/20px Roboto, sans-serif; text-align: center; }
.brown { background: #8d6e63; }
.tray { flex: 1; display: flex; align-items: center; margin-left: 85px; padding-bottom: 1px; }
.sync { margin-left: 22px; }
.cloud { margin-left: 18px; }
.lang { width: 46px; margin-left: 13px; font-size: 14.5px; line-height: 20px; text-align: center; }
.wifi { margin-left: 14px; }
.vol { margin-left: 9px; }
.batt { margin-left: 9px; }
.clock { width: 97px; font-size: 14.75px; line-height: 20px; text-align: right; }
.bell { margin-left: 11px; }
```
